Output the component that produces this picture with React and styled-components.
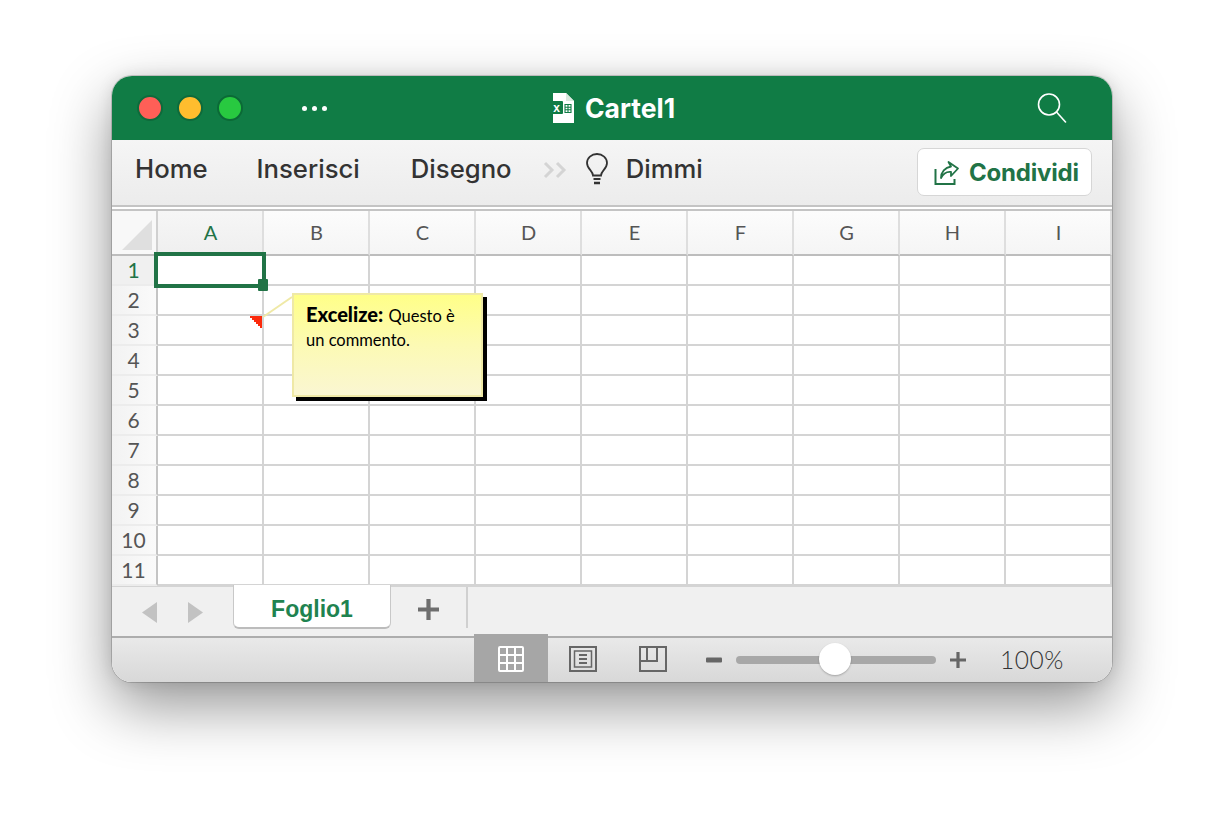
import React from "react";
import styled, { createGlobalStyle } from "styled-components";

const GlobalStyle = createGlobalStyle`
  html, body {
    margin: 0;
    padding: 0;
    background: #fff;
  }
  body {
    width: 1224px;
    height: 830px;
    overflow: hidden;
  }
`;

const UI_FONT = `Inter, "Liberation Sans", sans-serif`;
const SHEET_FONT = `Lato, "Open Sans", sans-serif`;
const GREEN = "#217346";

const Page = styled.div`
  padding: 76px 0 0 112px;
`;

const Window = styled.div`
  width: 1000px;
  height: 606px;
  border-radius: 20px;
  overflow: hidden;
  display: flex;
  flex-direction: column;
  background: #f0f0f0;
`;

const WindowShadow = styled.div`
  width: 1000px;
  border-radius: 20px;
  box-shadow: 0 24px 60px rgba(0, 0, 0, 0.42), 0 0 16px rgba(0, 0, 0, 0.1), 0 0 0 1px rgba(0, 0, 0, 0.16);
`;

/* title bar */
const TitleBar = styled.div`
  height: 64px;
  flex: none;
  background: #107c45;
  display: flex;
  align-items: center;
  padding-left: 25px;
  position: relative;
`;

const Lights = styled.div`
  display: flex;
  gap: 14px;
`;

const Light = styled.span`
  width: 26px;
  height: 26px;
  box-sizing: border-box;
  border-radius: 50%;
  background: ${(p) => p.$color};
  border: 2px solid ${(p) => p.$edge};
`;

const Dots = styled.div`
  display: flex;
  gap: 5px;
  margin-left: 59px;
`;

const Dot = styled.span`
  width: 5px;
  height: 5px;
  border-radius: 50%;
  background: #fff;
`;

const Title = styled.div`
  position: absolute;
  left: 438px;
  top: 17px;
  display: flex;
  align-items: center;
  gap: 11px;
  color: #fff;
  font: 700 26.5px/30px ${UI_FONT};
  letter-spacing: 0;
`;

const SearchButton = styled.div`
  margin-left: auto;
  margin-right: 45px;
  display: flex;
`;

/* ribbon */
const Ribbon = styled.div`
  height: 67px;
  flex: none;
  box-sizing: border-box;
  background: linear-gradient(#f5f5f5, #ececec);
  border-bottom: 2px solid #c4c4c4;
  display: flex;
  align-items: flex-start;
  padding-left: 23px;
  position: relative;
`;

const RibbonTab = styled.div`
  font: 500 25.7px/30px ${UI_FONT};
  color: #333;
  margin-top: 14px;
  margin-left: ${(p) => p.$gap || 0}px;
`;

const Chevrons = styled.div`
  margin: 21px 0 0 31px;
  display: flex;
`;

const Bulb = styled.div`
  margin: 13px 0 0 16px;
  display: flex;
`;

const ShareButton = styled.div`
  position: absolute;
  left: 805px;
  top: 8px;
  width: 175px;
  height: 48px;
  box-sizing: border-box;
  background: #fff;
  border: 1.5px solid #d6d6d6;
  border-radius: 7px;
  display: flex;
  align-items: center;
  padding: 2px 0 0 16px;
  gap: 9px;
  color: ${GREEN};
  font: 700 24px/30px ${UI_FONT};
  letter-spacing: -0.2px;
`;

const Divider = styled.div`
  height: 2px;
  flex: none;
  background: #fff;
  border-bottom: 2px solid #c4c4c4;
`;

/* sheet */
const Sheet = styled.div`
  position: relative;
  display: grid;
  grid-template-columns: 46px repeat(9, 106px);
  grid-template-rows: 45px;
  grid-auto-rows: 30px;
  flex: none;
  background: #fff;
`;

const Corner = styled.div`
  box-sizing: border-box;
  background: #f8f8f8;
  border-right: 2px solid #d0d0d0;
  border-bottom: 2px solid #bdbdbd;
  display: flex;
  padding: 9px 0 0 10px;
`;

const ColHeader = styled.div`
  box-sizing: border-box;
  background: ${(p) => (p.$active ? "linear-gradient(#f6f6f6, #efefef)" : "linear-gradient(#fcfcfc, #f5f5f5)")};
  border-right: 2px solid #dedede;
  border-bottom: 2px solid #bdbdbd;
  padding: 0 0 2px 1px;
  display: flex;
  align-items: center;
  justify-content: center;
  font: 400 20px/24px ${SHEET_FONT};
  color: ${(p) => (p.$active ? GREEN : "#555")};
`;

const RowHeader = styled.div`
  box-sizing: border-box;
  background: ${(p) => (p.$active ? "#f0f0f0" : "linear-gradient(90deg, #f2f2f2, #fafafa)")};
  border-right: 2px solid #c4c4c4;
  border-bottom: 2px solid #ececec;
  display: flex;
  align-items: center;
  justify-content: center;
  padding-right: 1px;
  font: 400 21px/24px ${SHEET_FONT};
  color: ${(p) => (p.$active ? GREEN : "#555")};
`;

const Cell = styled.div`
  box-sizing: border-box;
  border-right: 2px solid #d4d4d4;
  border-bottom: 2px solid #d4d4d4;
`;

const Selection = styled.div`
  position: absolute;
  left: 42px;
  top: 41px;
  width: 112px;
  height: 36px;
  box-sizing: border-box;
  border: 4px solid ${GREEN};
`;

const Handle = styled.div`
  position: absolute;
  right: -6px;
  bottom: -7px;
  width: 10px;
  height: 12px;
  background: ${GREEN};
  border-radius: 1px;
`;

const CommentLayer = styled.svg`
  position: absolute;
  left: 0;
  top: 0;
  pointer-events: none;
`;

const Comment = styled.div`
  position: absolute;
  left: 180px;
  top: 82px;
  width: 191px;
  height: 104px;
  box-sizing: border-box;
  padding: 7px 12px;
  background: linear-gradient(#ffff88, #fcfab4 50%, #faf6d2);
  border: 2px solid #efe9a6;
  box-shadow: 4px 4px 0 #000;
  font: 400 16.5px/24px ${SHEET_FONT};
  color: #000;
`;

const CommentAuthor = styled.b`
  font-size: 20px;
  font-weight: 900;
  margin-right: 1px;
`;

/* sheet tabs */
const TabBar = styled.div`
  height: 50px;
  flex: none;
  box-sizing: border-box;
  background: #f0f0f0;
  display: flex;
  align-items: flex-start;
  position: relative;
  border-top: 1px solid #d4d4d4;
`;

const TabNav = styled.div`
  width: 121px;
  height: 50px;
  display: flex;
  align-items: center;
  padding-left: 30px;
  gap: 31px;
  box-sizing: border-box;
`;

const SheetTab = styled.div`
  width: 158px;
  height: 44px;
  margin-top: -2px;
  padding-top: 6px;
  box-sizing: border-box;
  background: #fff;
  border: 1px solid #c8c8c8;
  border-top: none;
  border-bottom: 2px solid #bcbcbc;
  border-radius: 0 0 6px 6px;
  display: flex;
  align-items: center;
  justify-content: center;
  color: #1f8350;
  font: 700 23px/28px "Liberation Sans", Arial, sans-serif;
`;

const AddTab = styled.div`
  width: 77px;
  height: 41px;
  box-sizing: border-box;
  border-right: 2px solid #d0d0d0;
  display: flex;
  align-items: center;
  justify-content: center;
  padding-top: 4px;
`;

/* status bar */
const StatusBar = styled.div`
  flex: 1;
  box-sizing: border-box;
  background: linear-gradient(#e9e9e9, #d8d8d8);
  border-top: 2px solid #adadad;
  display: flex;
  align-items: center;
  position: relative;
`;

const ViewButton = styled.div`
  width: ${(p) => p.$w || 74}px;
  height: ${(p) => (p.$active ? 48 : 42)}px;
  flex: none;
  align-self: flex-start;
  margin-top: ${(p) => (p.$active ? -4 : 0)}px;
  padding-top: ${(p) => (p.$active ? 2 : 0)}px;
  box-sizing: border-box;
  background: ${(p) => (p.$active ? "#a6a6a6" : "transparent")};
  display: flex;
  align-items: center;
  justify-content: center;
`;

const Zoom = styled.div`
  display: flex;
  align-items: center;
  margin-left: 18px;
`;

const ZoomTrack = styled.div`
  position: relative;
  width: 200px;
  height: 8px;
  border-radius: 4px;
  background: #a8a8a8;
  margin: 0 14px 0 14px;
`;

const ZoomThumb = styled.div`
  position: absolute;
  left: 83px;
  top: -13px;
  width: 32px;
  height: 32px;
  border-radius: 50%;
  background: #fff;
  box-shadow: 0 1px 2px rgba(0, 0, 0, 0.25);
`;

const ZoomValue = styled.div`
  margin-left: 34px;
  font: 300 24.5px/30px ${SHEET_FONT};
  color: #333;
  letter-spacing: 0.5px;
`;

const COLS = ["A", "B", "C", "D", "E", "F", "G", "H", "I"];
const ROWS = [1, 2, 3, 4, 5, 6, 7, 8, 9, 10, 11];

const FileIcon = () => (
  <svg width="24" height="30" viewBox="0 0 24 30">
    <path d="M3 0h13l8 8v22H3z" fill="#fff" />
    <path d="M16 0l8 8h-8z" fill="#d9eadf" />
    <rect x="0" y="8" width="13" height="13" rx="1" fill="#107c45" />
    <text x="6.5" y="18.5" textAnchor="middle" fontFamily="Liberation Sans" fontSize="12" fill="#fff">x</text>
    <path d="M15 11.500h6v8h-6z M18 11.500v8 M15 14.200h6 M15 16.800h6" fill="none" stroke="#107c45" strokeWidth="1.100" />
  </svg>
);

const SearchIcon = () => (
  <svg width="30" height="30" viewBox="0 0 30 30" fill="none" stroke="#fff" strokeWidth="1.6">
    <circle cx="12" cy="11.5" r="10.5" />
    <path d="M19.5 19l9 10" strokeLinecap="round" />
  </svg>
);

const ChevronsIcon = () => (
  <svg width="26" height="18" viewBox="0 0 26 18" fill="none" stroke="#d4d4d4" strokeWidth="3">
    <path d="M2 2l7 7-7 7M14 2l7 7-7 7" />
  </svg>
);

const BulbIcon = () => (
  <svg width="24" height="32" viewBox="0 0 24 32" fill="none" stroke="#333" strokeWidth="1.8">
    <path d="M8 22.500c0-4.500-6-6.500-6-12.500a10 9 0 0 1 20 0c0 6-6 8-6 12.500z" />
    <path d="M8.500 26h7" />
    <path d="M9 30h6" strokeWidth="2.400" />
  </svg>
);

const ShareIcon = () => (
  <svg width="26" height="26" viewBox="0 0 26 26" fill="none" stroke={GREEN} strokeWidth="2">
    <path d="M1.500 9v15h19v-5" />
    <path d="M14.500 2l9.500 6.500-7 7.500v-4c-4-.5-7.500 1-10 6 0-6 4-10.500 10-11.500z" strokeWidth="1.800" strokeLinejoin="round" />
  </svg>
);

const Triangle = ({ dir }) => (
  <svg width="15" height="21" viewBox="0 0 15 21" fill="#c2c2c2">
    <path d={dir === "left" ? "M15 0v21L0 10.500z" : "M0 0v21l15-10.500z"} />
  </svg>
);

const PlusIcon = ({ size, color, weight }) => (
  <svg width={size} height={size} viewBox="0 0 20 20" fill={color}>
    <path d={`M${10 - weight / 2} 0h${weight}v${10 - weight / 2}H20v${weight}H${10 + weight / 2}V20h-${weight}V${10 + weight / 2}H0v-${weight}h${10 - weight / 2}z`} />
  </svg>
);

const MinusIcon = () => (
  <svg width="16" height="6" viewBox="0 0 16 6">
    <rect width="16" height="5" y="0.500" rx="1" fill="#666" />
  </svg>
);

const GridIcon = () => (
  <svg width="26" height="26" viewBox="0 0 26 26" fill="none" stroke="#fff" strokeWidth="2">
    <rect x="1" y="1" width="24" height="24" rx="1" />
    <path d="M9 1v24M17 1v24M1 9h24M1 17h24" />
  </svg>
);

const PageIcon = () => (
  <svg width="28" height="26" viewBox="0 0 28 26" fill="none" stroke="#666">
    <rect x="1" y="1" width="26" height="24" strokeWidth="2" />
    <rect x="5.500" y="5" width="17" height="16" strokeWidth="1.500" />
    <path d="M10 9h8M10 13h8M10 17h8" strokeWidth="2" />
  </svg>
);

const BreakIcon = () => (
  <svg width="28" height="26" viewBox="0 0 28 26" fill="none" stroke="#666" strokeWidth="2">
    <rect x="1" y="1" width="26" height="24" />
    <path d="M1 15h18M8 1v14M18 1v14" />
  </svg>
);

const App = () => (
  <>
    <GlobalStyle />
    <Page>
      <WindowShadow>
        <Window>
          <TitleBar>
            <Lights>
              <Light $color="#ff5f57" $edge="#0e6a3b" />
              <Light $color="#ffbd2e" $edge="#0e6a3b" />
              <Light $color="#28c940" $edge="#0b6a36" />
            </Lights>
            <Dots>
              <Dot />
              <Dot />
              <Dot />
            </Dots>
            <Title>
              <FileIcon />
              Cartel1
            </Title>
            <SearchButton>
              <SearchIcon />
            </SearchButton>
          </TitleBar>

          <Ribbon>
            <RibbonTab>Home</RibbonTab>
            <RibbonTab $gap={49}>Inserisci</RibbonTab>
            <RibbonTab $gap={51}>Disegno</RibbonTab>
            <Chevrons>
              <ChevronsIcon />
            </Chevrons>
            <Bulb>
              <BulbIcon />
            </Bulb>
            <RibbonTab $gap={17}>Dimmi</RibbonTab>
            <ShareButton>
              <ShareIcon />
              Condividi
            </ShareButton>
          </Ribbon>
          <Divider />

          <Sheet>
            <Corner>
              <svg width="30" height="30" viewBox="0 0 30 30">
                <path d="M30 0v30H0z" fill="#dfdfdf" />
              </svg>
            </Corner>
            {COLS.map((c, i) => (
              <ColHeader key={c} $active={i === 0}>
                {c}
              </ColHeader>
            ))}
            {ROWS.map((r) => (
              <React.Fragment key={r}>
                <RowHeader $active={r === 1}>{r}</RowHeader>
                {COLS.map((c) => (
                  <Cell key={c} />
                ))}
              </React.Fragment>
            ))}
            <Selection>
              <Handle />
            </Selection>
            <CommentLayer width="200" height="130" viewBox="0 0 200 130">
              <path d="M151 106l29-20" stroke="#efe9a6" strokeWidth="2" fill="none" />
              <path d="M138 105h12v12h-2v-2h-2v-2h-2v-2h-2v-2h-2v-2h-2z" fill="#fb2a0c" />
            </CommentLayer>
            <Comment>
              <CommentAuthor>Excelize:</CommentAuthor> Questo è un commento.
            </Comment>
          </Sheet>

          <TabBar>
            <TabNav>
              <Triangle dir="left" />
              <Triangle dir="right" />
            </TabNav>
            <SheetTab>Foglio1</SheetTab>
            <AddTab>
              <PlusIcon size={21} color="#6e6e6e" weight={4} />
            </AddTab>
          </TabBar>

          <StatusBar>
            <ViewButton $w={362} />
            <ViewButton $active>
              <GridIcon />
            </ViewButton>
            <ViewButton $w={70}>
              <PageIcon />
            </ViewButton>
            <ViewButton $w={70}>
              <BreakIcon />
            </ViewButton>
            <Zoom>
              <MinusIcon />
              <ZoomTrack>
                <ZoomThumb />
              </ZoomTrack>
              <PlusIcon size={16} color="#666" weight={4} />
              <ZoomValue>100%</ZoomValue>
            </Zoom>
          </StatusBar>
        </Window>
      </WindowShadow>
    </Page>
  </>
);

export default App;
